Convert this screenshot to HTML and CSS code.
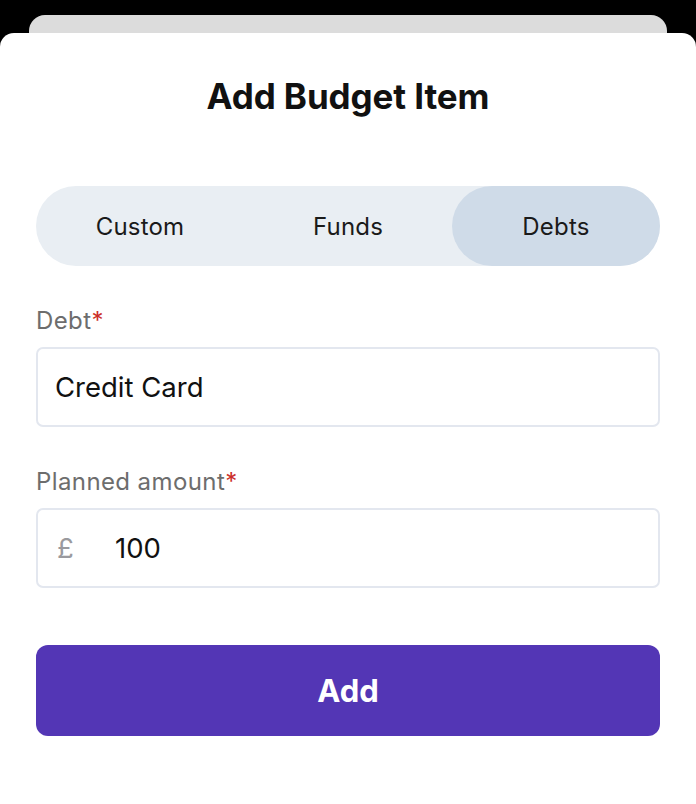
FILE: index.html
```html
<!DOCTYPE html>
<html lang="en">
<head>
<meta charset="utf-8">
<title>Add Budget Item</title>
<link rel="stylesheet" href="styles.css">
</head>
<body>
<div class="backdrop">
  <div class="behind-card"></div>
  <div class="sheet">
    <h1 class="title">Add Budget Item</h1>
    <div class="segmented">
      <div class="segment">Custom</div>
      <div class="segment">Funds</div>
      <div class="segment active">Debts</div>
    </div>
    <div class="field">
      <label class="label">Debt<span class="req">*</span></label>
      <div class="input">Credit Card</div>
    </div>
    <div class="field">
      <label class="label">Planned amount<span class="req">*</span></label>
      <div class="input money"><span class="currency">£</span><span class="amount">100</span></div>
    </div>
    <button class="add-btn">Add</button>
  </div>
</div>
</body>
</html>
```

FILE: styles.css
```css
html, body {
  margin: 0;
  padding: 0;
  background: #000;
  height: 100%;
}
body {
  font-family: Inter, "Noto Sans", "Liberation Sans", sans-serif;
}
.backdrop {
  display: flex;
  flex-direction: column;
  padding-top: 15px;
  height: 804px;
  box-sizing: border-box;
  overflow: hidden;
}
.behind-card {
  margin: 0 29px;
  height: 40px;
  background: #dcdcdc;
  border-radius: 16px 16px 0 0;
  flex: none;
}
.sheet {
  margin-top: -22px;
  background: #fff;
  border-radius: 14px 14px 0 0;
  flex: 1;
  padding: 0 36px;
  display: flex;
  flex-direction: column;
}
.title {
  margin: 39px 0 0;
  text-align: center;
  font-size: 35px;
  line-height: 48px;
  font-weight: 700;
  color: #111;
  letter-spacing: -0.1px;
}
.segmented {
  margin-top: 66px;
  height: 80px;
  background: #e9eef3;
  border-radius: 40px;
  display: grid;
  grid-template-columns: 1fr 1fr 1fr;
}
.segment {
  display: flex;
  align-items: center;
  justify-content: center;
  font-size: 24px;
  letter-spacing: 0.2px;
  color: #1a1a1a;
  border-radius: 40px;
}
.segment.active {
  background: #cfdbe8;
}
.field {
  display: flex;
  flex-direction: column;
}
.label {
  font-size: 24px;
  letter-spacing: 0.4px;
  color: #6d6d6d;
  line-height: 28px;
  margin-top: 41px;
  margin-bottom: 12px;
}
.req {
  color: #cc2f2a;
}
.input {
  height: 80px;
  box-sizing: border-box;
  border: 2px solid #e3e7ef;
  border-radius: 7px;
  display: flex;
  align-items: center;
  padding-left: 17px;
  font-size: 27.5px;
  color: #111;
}
.money .currency {
  color: #9a9a9e;
  width: 58px;
  padding-left: 2px;
}
.add-btn {
  margin-top: 57px;
  height: 91px;
  border: none;
  border-radius: 12px;
  background: #5336b5;
  color: #fff;
  font-family: Inter, "Noto Sans", "Liberation Sans", sans-serif;
  font-size: 31px;
  font-weight: 700;
}
```
